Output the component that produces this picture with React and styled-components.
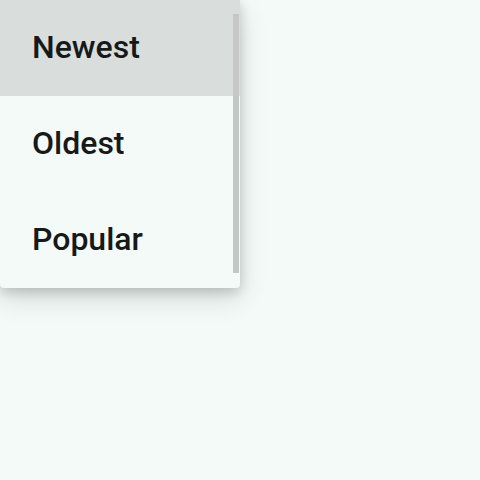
import React, { useState } from 'react';
import styled, { createGlobalStyle } from 'styled-components';

const GlobalStyle = createGlobalStyle`
  html, body {
    margin: 0;
    padding: 0;
    background: #f3faf8;
    font-family: Roboto, "Noto Sans", sans-serif;
  }
`;

const Page = styled.div`
  width: 480px;
  height: 480px;
  background: #f3faf8;
`;

const Menu = styled.ul`
  position: relative;
  width: 240px;
  margin: 0;
  padding: 0;
  list-style: none;
  background: #f3faf8;
  border-radius: 0 0 4px 4px;
  box-shadow: 0 4px 12px rgba(0, 0, 0, 0.16), 0 10px 28px rgba(0, 0, 0, 0.14);
`;

const Item = styled.li`
  height: 96px;
  display: flex;
  align-items: center;
  padding: 0 32px 3px;
  box-sizing: border-box;
  font-size: 32px;
  font-weight: 500;
  color: #161918;
  background: ${(p) => (p.$active ? '#d9dedc' : 'transparent')};
  cursor: pointer;
`;

const Thumb = styled.div`
  position: absolute;
  top: 14px;
  right: 1px;
  width: 6px;
  height: 259px;
  background: #c4c7c6;
`;

const options = ['Newest', 'Oldest', 'Popular'];

const App = () => {
  const [active, setActive] = useState('Newest');

  return (
    <Page>
      <GlobalStyle />
      <Menu>
        {options.map((o) => (
          <Item key={o} $active={o === active} onClick={() => setActive(o)}>
            {o}
          </Item>
        ))}
        <Thumb />
      </Menu>
    </Page>
  );
};

export default App;
